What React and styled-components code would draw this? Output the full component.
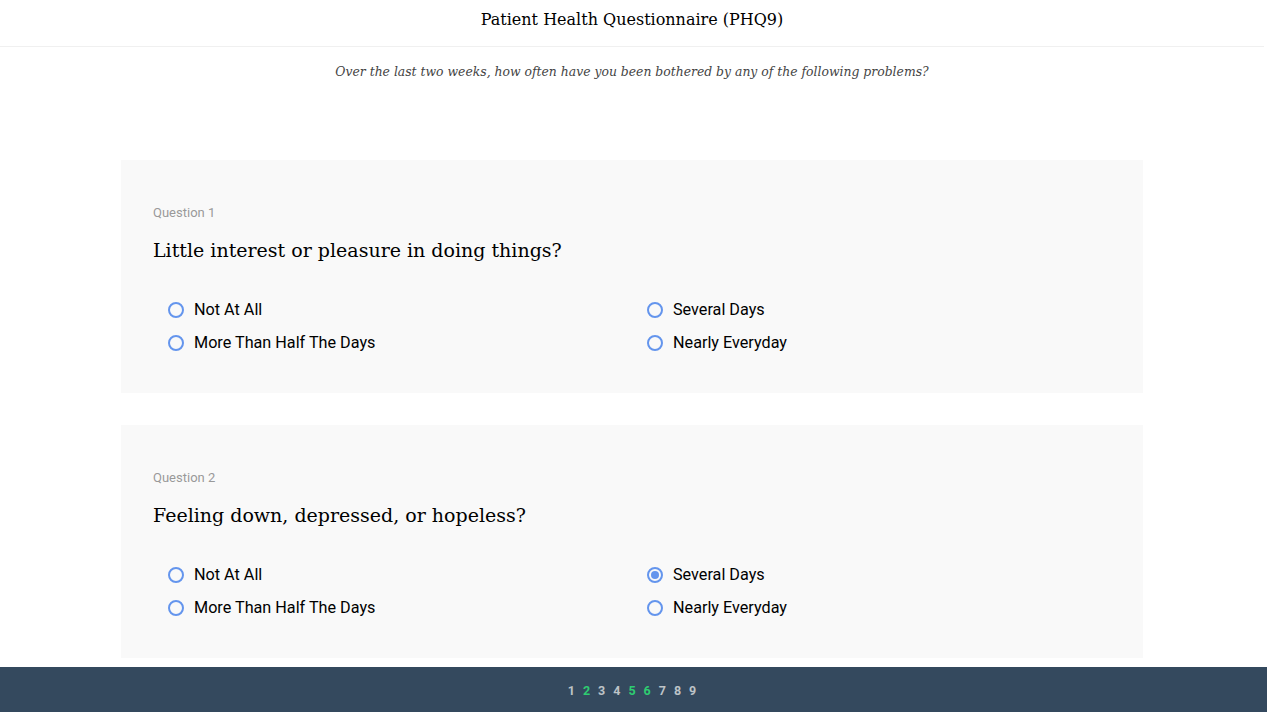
import styled, { createGlobalStyle } from "styled-components";

const GlobalStyle = createGlobalStyle`
    html, body {
        margin: 0;
        padding: 0;
        background: #ffffff;
    }
    body {
        padding-right: 3px;
        font-family: Roboto, "Liberation Sans", sans-serif;
        color: #000;
    }
`

const questions = [
    { id: 1, text: "Little interest or pleasure in doing things?", answer: null },
    { id: 2, text: "Feeling down, depressed, or hopeless?", answer: "several" },
]

const options = [
    { key: "none", label: "Not At All" },
    { key: "several", label: "Several Days" },
    { key: "half", label: "More Than Half The Days" },
    { key: "nearly", label: "Nearly Everyday" },
]

const progress = [
    { n: 1, done: false },
    { n: 2, done: true },
    { n: 3, done: false },
    { n: 4, done: false },
    { n: 5, done: true },
    { n: 6, done: true },
    { n: 7, done: false },
    { n: 8, done: false },
    { n: 9, done: false },
]

function Question({ question }) {
    return (
        <Card>
            <Label>Question {question.id}</Label>
            <Title>{question.text}</Title>
            <Options>
                {options.map((opt) => (
                    <Option key={opt.key}>
                        <Radio $checked={question.answer === opt.key} />
                        <span>{opt.label}</span>
                    </Option>
                ))}
            </Options>
        </Card>
    )
}

function App() {
    return (
        <>
            <GlobalStyle />
            <Header>
                <h1>Patient Health Questionnaire (PHQ9)</h1>
            </Header>
            <Intro>Over the last two weeks, how often have you been bothered by any of the following problems?</Intro>
            <Main>
                {questions.map((q) => (
                    <Question key={q.id} question={q} />
                ))}
            </Main>
            <Footer>
                {progress.map((p) => (
                    <Step key={p.n} $done={p.done}>{p.n}</Step>
                ))}
            </Footer>
        </>
    )
}

const Header = styled.header`
    box-sizing: border-box;
    height: 47px;
    padding-top: 10px;
    border-bottom: 1px solid #f0f0f0;
    text-align: center;

    h1 {
        margin: 0;
        font-family: "DejaVu Serif", serif;
        font-weight: normal;
        font-size: 16px;
        line-height: 20px;
        color: #000;
    }
`

const Intro = styled.p`
    margin: 16px 0 0;
    text-align: center;
    font-family: "DejaVu Serif", serif;
    font-style: italic;
    font-size: 12.4px;
    line-height: 18px;
    color: #444;
`

const Main = styled.main`
    width: 1022px;
    margin: 79px auto 0;
    display: flex;
    flex-direction: column;
    gap: 32px;
    padding-bottom: 80px;
`

const Card = styled.section`
    background: #f9f9f9;
    padding: 45px 32px 34px;
`

const Label = styled.div`
    font-size: 13px;
    line-height: 16px;
    color: #999;
`

const Title = styled.h2`
    margin: 15px 0 0;
    font-family: "DejaVu Serif", serif;
    font-weight: normal;
    font-size: 19px;
    line-height: 28px;
    color: #000;
`

const Options = styled.div`
    margin-top: 29px;
    padding-left: 15px;
    display: grid;
    grid-template-columns: 479px 479px;
`

const Option = styled.label`
    display: flex;
    align-items: center;
    gap: 10px;
    height: 33px;
    font-size: 16.2px;
    color: #000;
`

const Radio = styled.span`
    box-sizing: border-box;
    width: 16px;
    height: 16px;
    border-radius: 50%;
    border: 2px solid #6495ed;
    display: flex;
    align-items: center;
    justify-content: center;

    &::after {
        content: "";
        width: 8px;
        height: 8px;
        border-radius: 50%;
        background: #6495ed;
        display: ${(p) => (p.$checked ? "block" : "none")};
    }
`

const Footer = styled.footer`
    position: fixed;
    left: 0;
    right: 0;
    bottom: 0;
    height: 45px;
    padding-right: 3px;
    background: #34495e;
    display: flex;
    align-items: center;
    justify-content: center;
    gap: 8px;
`

const Step = styled.span`
    font-size: 12.5px;
    line-height: 1;
    padding-top: 3px;
    font-weight: bold;
    color: ${(p) => (p.$done ? "#2ecc71" : "#bdc3c7")};
`

export default App
